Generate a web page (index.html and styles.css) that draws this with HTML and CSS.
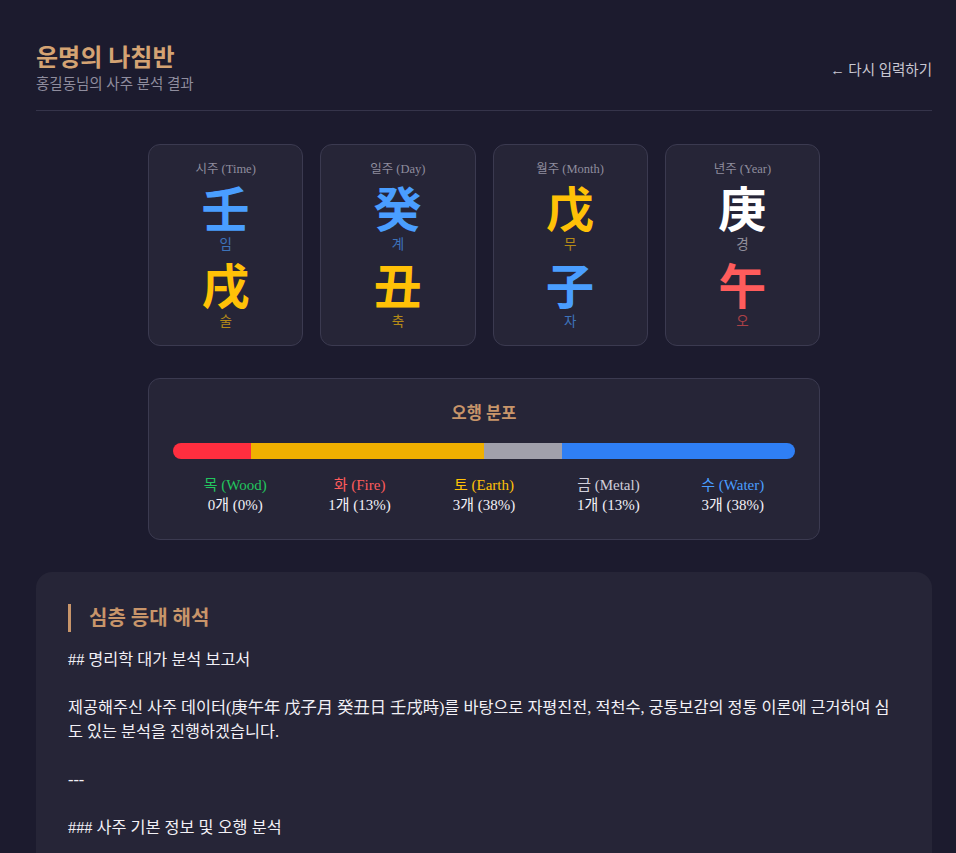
FILE: index.html
```html
<!DOCTYPE html>
<html lang="ko">
    <head>
        <meta charset="utf-8">
        <title>운명의 나침반 - 사주 분석 결과</title>
        <link rel="stylesheet" href="styles.css">
    </head>
    <body>
        <div class="page">
            <header class="header">
                <div>
                    <h1 class="title">운명의 나침반</h1>
                    <p class="subtitle">홍길동님의 사주 분석 결과</p>
                </div>
                <a class="back-link" href="#">← 다시 입력하기</a>
            </header>

            <section class="pillars">
                <div class="pillar">
                    <div class="pillar-label">시주 (Time)</div>
                    <div class="hanja water">壬</div>
                    <div class="reading water">임</div>
                    <div class="hanja earth">戌</div>
                    <div class="reading earth">술</div>
                </div>
                <div class="pillar">
                    <div class="pillar-label">일주 (Day)</div>
                    <div class="hanja water">癸</div>
                    <div class="reading water">계</div>
                    <div class="hanja earth">丑</div>
                    <div class="reading earth">축</div>
                </div>
                <div class="pillar">
                    <div class="pillar-label">월주 (Month)</div>
                    <div class="hanja earth">戊</div>
                    <div class="reading earth">무</div>
                    <div class="hanja water">子</div>
                    <div class="reading water">자</div>
                </div>
                <div class="pillar">
                    <div class="pillar-label">년주 (Year)</div>
                    <div class="hanja metal">庚</div>
                    <div class="reading metal">경</div>
                    <div class="hanja fire">午</div>
                    <div class="reading fire">오</div>
                </div>
            </section>

            <section class="elements">
                <h2 class="elements-title">오행 분포</h2>
                <div class="bar">
                    <div class="bar-fire" style="width: 12.5%"></div>
                    <div class="bar-earth" style="width: 37.5%"></div>
                    <div class="bar-metal" style="width: 12.5%"></div>
                    <div class="bar-water" style="width: 37.5%"></div>
                </div>
                <div class="legend">
                    <div class="legend-item">
                        <div class="legend-name wood">목 (Wood)</div>
                        <div class="legend-count">0개 (0%)</div>
                    </div>
                    <div class="legend-item">
                        <div class="legend-name fire">화 (Fire)</div>
                        <div class="legend-count">1개 (13%)</div>
                    </div>
                    <div class="legend-item">
                        <div class="legend-name earth">토 (Earth)</div>
                        <div class="legend-count">3개 (38%)</div>
                    </div>
                    <div class="legend-item">
                        <div class="legend-name metal">금 (Metal)</div>
                        <div class="legend-count">1개 (13%)</div>
                    </div>
                    <div class="legend-item">
                        <div class="legend-name water">수 (Water)</div>
                        <div class="legend-count">3개 (38%)</div>
                    </div>
                </div>
            </section>

            <section class="report">
                <h2 class="report-title">심층 등대 해석</h2>
<div class="report-body">## 명리학 대가 분석 보고서

제공해주신 사주 데이터(庚午年 戊子月 癸丑日 壬戌時)를 바탕으로 자평진전, 적천수, 궁통보감의 정통 이론에 근거하여 심도 있는 분석을 진행하겠습니다.

---

### 사주 기본 정보 및 오행 분석

#### 1. 사주 원국</div>
            </section>
        </div>
    </body>
</html>
```

FILE: styles.css
```css
body {
    margin: 0;
    background-color: #1c1b2e;
    color: #e8e6ee;
    font-family: "Liberation Serif", "Noto Sans CJK KR", serif;
}

.page {
    margin: 0 24px 0 36px;
    padding-top: 42px;
}

.header {
    display: flex;
    justify-content: space-between;
    align-items: center;
    padding-bottom: 16px;
    border-bottom: 1px solid #35344a;
}

.title {
    margin: 0;
    font-size: 24px;
    line-height: 32px;
    font-weight: bold;
    color: #d4a373;
}

.subtitle {
    margin: 0;
    font-size: 14.5px;
    line-height: 20px;
    color: #8f8d9e;
}

.back-link {
    font-size: 14.5px;
    color: #c9c7d2;
    text-decoration: none;
}

.pillars {
    display: grid;
    grid-template-columns: repeat(4, 1fr);
    gap: 17px;
    width: 672px;
    margin: 33px auto 0;
}

.pillar {
    background-color: #262537;
    border: 1px solid #3b3a50;
    border-radius: 12px;
    padding: 15px 0 13px;
    text-align: center;
}

.pillar-label {
    font-size: 12.5px;
    line-height: 18px;
    color: #8f8d9e;
}

.hanja {
    font-family: "Noto Sans CJK KR", sans-serif;
    font-size: 48px;
    line-height: 56px;
    font-weight: bold;
}

.reading {
    font-size: 13.5px;
    line-height: 21px;
    opacity: 0.65;
}

.wood { color: #22c55e; }
.fire { color: #ff5c5c; }
.earth { color: #ffc107; }
.metal { color: #ffffff; }
.water { color: #4a9eff; }

.reading.metal { color: #c8c6d0; }
.reading.fire { color: #f05050; }

.elements {
    width: 622px;
    margin: 32px auto 0;
    padding: 24px 24px 24px;
    background-color: #262537;
    border: 1px solid #3b3a50;
    border-radius: 12px;
}

.elements-title {
    margin: 0;
    font-size: 16.5px;
    line-height: 22px;
    font-weight: bold;
    text-align: center;
    color: #c8956a;
}

.bar {
    display: flex;
    height: 16px;
    margin-top: 18px;
    border-radius: 8px;
    overflow: hidden;
}

.bar-fire { background-color: #ff2e3f; }
.bar-earth { background-color: #f0b000; }
.bar-metal { background-color: #a1a0ab; }
.bar-water { background-color: #2f7ff5; }

.legend {
    display: grid;
    grid-template-columns: repeat(5, 1fr);
    margin-top: 16px;
    text-align: center;
}

.legend-name,
.legend-count {
    font-size: 15px;
    line-height: 20px;
}

.legend-name.metal { color: #d0ceda; }

.legend-count {
    color: #f2f0f6;
}

.report {
    margin-top: 32px;
    padding: 32px;
    background-color: #262537;
    border-radius: 16px;
}

.report-title {
    margin: 0 0 16px;
    padding-left: 18px;
    border-left: 3px solid #c8956a;
    font-size: 20px;
    line-height: 28px;
    font-weight: bold;
    color: #c8956a;
}

.report-body {
    white-space: pre-wrap;
    word-break: break-all;
    font-size: 16.3px;
    line-height: 24px;
    color: #f2f0f6;
}
```
